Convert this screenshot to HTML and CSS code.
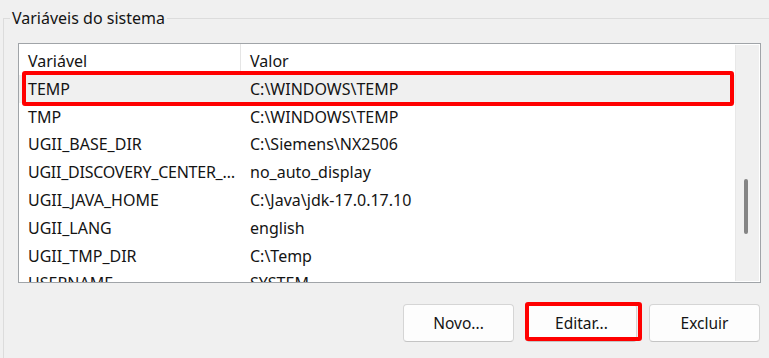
FILE: index.html
```html
<!DOCTYPE html>
<html lang="pt-BR">
<head>
    <meta charset="UTF-8">
    <meta name="viewport" content="width=device-width, initial-scale=1.0">
    <title>Variáveis do sistema</title>
    <link rel="stylesheet" href="styles.css">
</head>
<body>
    <fieldset class="group">
        <legend>Variáveis do sistema</legend>

        <div class="listbox">
            <div class="table">
                <div class="row head">
                    <div class="cell name">Variável</div>
                    <div class="cell">Valor</div>
                </div>
                <div class="row selected">
                    <div class="cell name">TEMP</div>
                    <div class="cell">C:\WINDOWS\TEMP</div>
                </div>
                <div class="row">
                    <div class="cell name">TMP</div>
                    <div class="cell">C:\WINDOWS\TEMP</div>
                </div>
                <div class="row">
                    <div class="cell name">UGII_BASE_DIR</div>
                    <div class="cell">C:\Siemens\NX2506</div>
                </div>
                <div class="row">
                    <div class="cell name tight">UGII_DISCOVERY_CENTER_…</div>
                    <div class="cell">no_auto_display</div>
                </div>
                <div class="row">
                    <div class="cell name">UGII_JAVA_HOME</div>
                    <div class="cell">C:\Java\jdk-17.0.17.10</div>
                </div>
                <div class="row">
                    <div class="cell name">UGII_LANG</div>
                    <div class="cell">english</div>
                </div>
                <div class="row">
                    <div class="cell name">UGII_TMP_DIR</div>
                    <div class="cell">C:\Temp</div>
                </div>
                <div class="row">
                    <div class="cell name">USERNAME</div>
                    <div class="cell">SYSTEM</div>
                </div>
            </div>
            <div class="scrollbar">
                <div class="thumb"></div>
            </div>
        </div>

        <div class="buttons">
            <button class="btn">Novo...</button>
            <button class="btn marked">Editar...</button>
            <button class="btn">Excluir</button>
        </div>
    </fieldset>
</body>
</html>
```

FILE: styles.css
```css
/* Janela de variáveis de ambiente */
html, body {
    margin: 0;
    height: 100%;
    overflow: hidden;
}

body {
    font-family: "Noto Sans", "Open Sans", sans-serif;
    font-size: 16px;
    color: #141414;
    background-color: #f0f0f0;
}

.group {
    margin: 7px 0 0 3px;
    padding: 0;
    height: 350px;
    min-width: 0;
    border: 1px solid #dcdcdc;
    border-right: none;
    border-bottom: none;
}

.group legend {
    margin-left: 6px;
    padding: 0 2px;
    line-height: 22px;
}

.listbox {
    display: flex;
    margin: 14px 0 0 14px;
    width: 741px;
    height: 238px;
    border: 1px solid #a0a4a8;
    background-color: #fff;
    overflow: hidden;
}

.table {
    flex: 1;
    overflow: hidden;
}

.row {
    position: relative;
    display: flex;
    height: 27.8px;
    align-items: center;
}

.row.head {
    height: 31px;
    padding-top: 2px;
    box-sizing: border-box;
}

.row.head .name {
    align-self: stretch;
    display: flex;
    align-items: center;
    border-right: 1px solid #e5e5e5;
    margin-top: -2px;
    padding-top: 2px;
}

.cell {
    padding-left: 9px;
    white-space: nowrap;
}

.cell.name {
    width: 222px;
    box-sizing: border-box;
    flex-shrink: 0;
}

.cell.tight {
    letter-spacing: -0.25px;
}

.row.selected {
    background-color: #f0f0f0;
}

/* marcação vermelha sobre a linha */
.row.selected::after {
    content: "";
    position: absolute;
    top: -4px;
    bottom: -3px;
    left: 3px;
    right: 1px;
    border: 4px solid #ff0000;
    border-radius: 3px;
}

.scrollbar {
    width: 23px;
    flex-shrink: 0;
    background-color: #f0f0f0;
    border-left: 1px solid #e8e8e8;
    margin: 1px 1px 1px 0;
    position: relative;
}

.thumb {
    position: absolute;
    left: 8px;
    top: 134px;
    width: 4px;
    height: 55px;
    border-radius: 2px;
    background-color: #858585;
}

.buttons {
    display: flex;
    justify-content: flex-end;
    gap: 12px;
    margin-top: 21px;
    padding-right: 9px;
}

.btn {
    position: relative;
    width: 111px;
    height: 38px;
    font-family: inherit;
    font-size: 15.5px;
    color: #141414;
    background-color: #fdfdfd;
    border: 1px solid #d5d5d5;
    border-bottom-color: #c4c4c4;
    border-radius: 4px;
}

.btn.marked::after {
    content: "";
    position: absolute;
    top: -3px;
    bottom: 0;
    left: -2px;
    right: -6px;
    border: 4px solid #ff0000;
    border-radius: 3px;
}
```
